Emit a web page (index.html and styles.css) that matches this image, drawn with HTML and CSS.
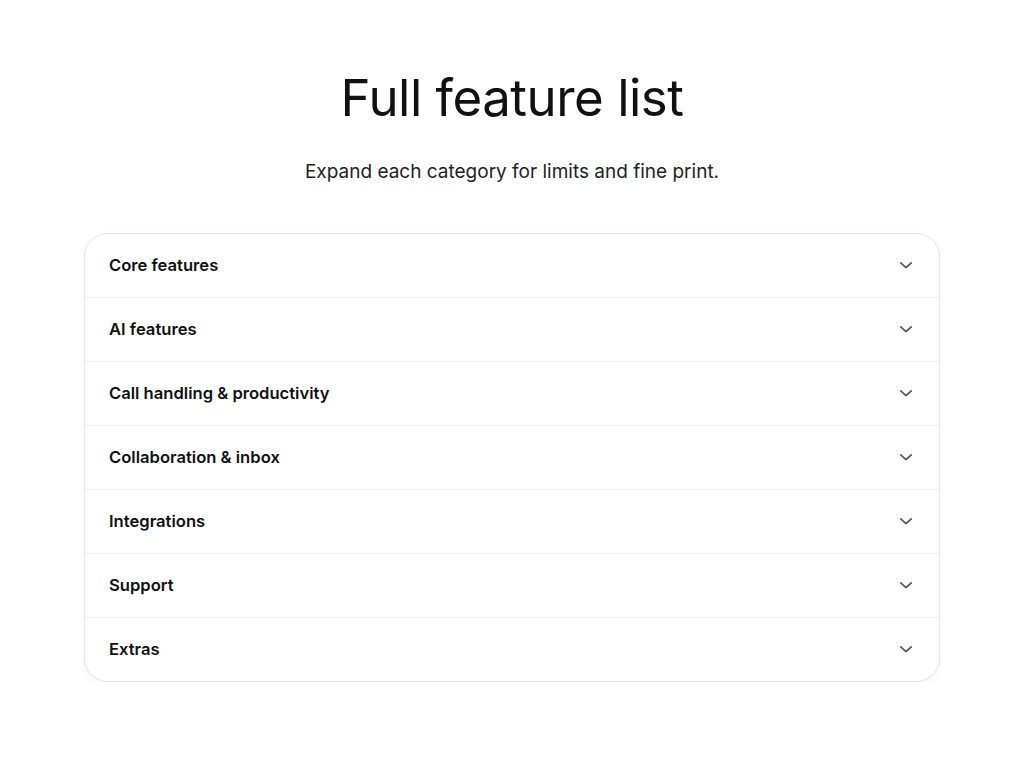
FILE: index.html
```html
<!DOCTYPE html>
<html lang="en">
<head>
<meta charset="utf-8">
<title>Full feature list</title>
<link rel="stylesheet" href="styles.css">
</head>
<body>
<main class="page">
  <h1 class="title">Full feature list</h1>
  <p class="subtitle">Expand each category for limits and fine print.</p>
  <div class="accordion">
    <div class="row"><span class="label">Core features</span><svg class="chev" viewBox="0 0 16 16"><path d="M2 5.5 8 11l6-5.5"/></svg></div>
    <div class="row"><span class="label">AI features</span><svg class="chev" viewBox="0 0 16 16"><path d="M2 5.5 8 11l6-5.5"/></svg></div>
    <div class="row"><span class="label">Call handling &amp; productivity</span><svg class="chev" viewBox="0 0 16 16"><path d="M2 5.5 8 11l6-5.5"/></svg></div>
    <div class="row"><span class="label">Collaboration &amp; inbox</span><svg class="chev" viewBox="0 0 16 16"><path d="M2 5.5 8 11l6-5.5"/></svg></div>
    <div class="row"><span class="label">Integrations</span><svg class="chev" viewBox="0 0 16 16"><path d="M2 5.5 8 11l6-5.5"/></svg></div>
    <div class="row"><span class="label">Support</span><svg class="chev" viewBox="0 0 16 16"><path d="M2 5.5 8 11l6-5.5"/></svg></div>
    <div class="row"><span class="label">Extras</span><svg class="chev" viewBox="0 0 16 16"><path d="M2 5.5 8 11l6-5.5"/></svg></div>
  </div>
</main>
</body>
</html>
```

FILE: styles.css
```css
html, body {
  margin: 0;
  padding: 0;
  background: #ffffff;
}
body {
  font-family: Inter, "Noto Sans", sans-serif;
  color: #111111;
}
.page {
  display: flex;
  flex-direction: column;
  align-items: center;
  padding: 67px 84px 0;
}
.title {
  margin: 0;
  font-size: 51px;
  line-height: 61px;
  font-weight: 400;
  letter-spacing: -0.5px;
  color: #111111;
}
.subtitle {
  margin: 30px 0 0;
  font-size: 19px;
  line-height: 28px;
  color: #222222;
}
.accordion {
  margin-top: 47px;
  width: 100%;
  box-sizing: border-box;
  border: 1px solid #e6e6e6;
  border-radius: 24px;
  box-shadow: 0 2px 6px rgba(0, 0, 0, 0.05);
  overflow: hidden;
  background: #fff;
}
.row {
  box-sizing: border-box;
  display: flex;
  align-items: center;
  justify-content: space-between;
  height: 64px;
  padding: 0 26px 2px 24px;
  border-top: 1px solid #efefef;
}
.row:first-child {
  border-top: none;
  height: 63px;
}
.label {
  font-size: 16.6px;
  font-weight: 600;
  color: #111111;
}
.chev {
  width: 14px;
  height: 14px;
  fill: none;
  stroke: #5a5a5a;
  stroke-width: 2;
  stroke-linecap: round;
  stroke-linejoin: round;
}
```
